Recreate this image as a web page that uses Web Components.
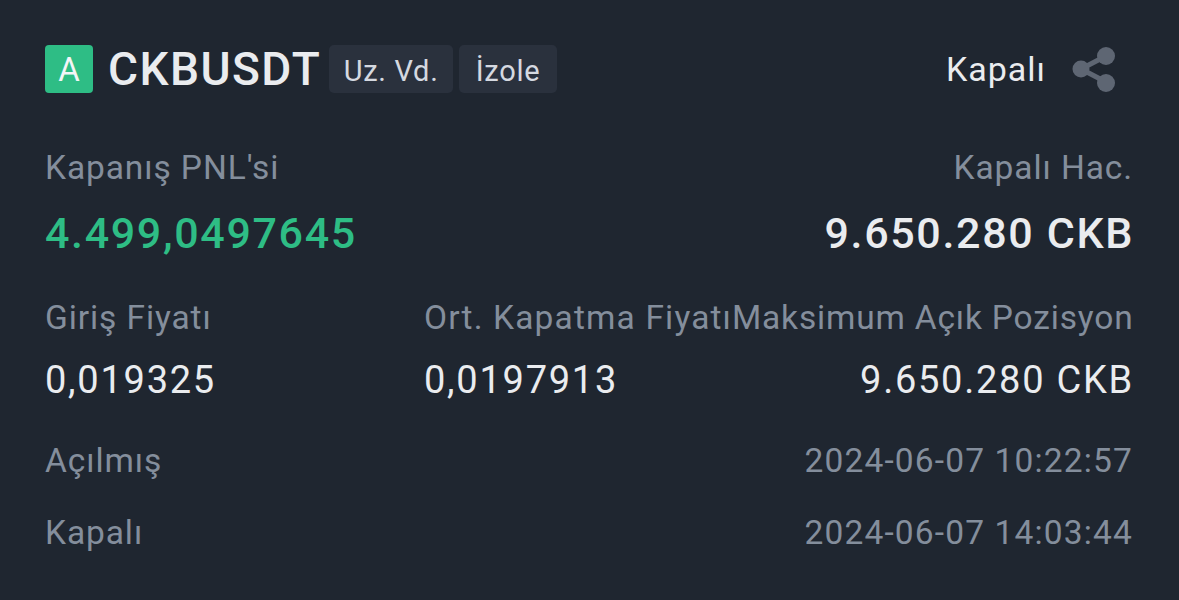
<!DOCTYPE html>
<html>
<head>
<meta charset="utf-8">
<style>
html, body { margin: 0; background: #1f2630; }
body { font-family: Roboto, sans-serif; width: 1179px; height: 600px; overflow: hidden; }
</style>
</head>
<body>
<pnl-card></pnl-card>
<script>
class PnlTag extends HTMLElement {
    constructor() {
        super();
        const shadowRoot = this.attachShadow({ mode: 'open' });
        shadowRoot.innerHTML = `
            <style>
                :host {
                    display: block;
                    box-sizing: border-box;
                    min-width: 98px;
                    height: 48px;
                    line-height: 52px;
                    padding: 0 14.5px;
                    text-align: center;
                    background: #2a313d;
                    border-radius: 5px;
                    color: #d5d9e0;
                    font-family: Roboto, sans-serif;
                    font-size: 29px;
                    letter-spacing: .7px;
                }
            </style>
            <slot></slot>
        `;
    }
}
customElements.define("pnl-tag", PnlTag);

class PnlHeader extends HTMLElement {
    constructor() {
        super();
        const shadowRoot = this.attachShadow({ mode: 'open' });
        shadowRoot.innerHTML = `
            <style>
                :host { display: flex; align-items: center; height: 48px; }
                .lado {
                    width: 48px; height: 48px; border-radius: 4px;
                    background: #2ebd85; color: #f3f5f7;
                    display: flex; align-items: center; justify-content: center;
                    font: 400 33px Roboto, sans-serif;
                }
                .par {
                    margin: 0 8px 0 15px;
                    color: #eaecef;
                    font: 500 46px/50px Roboto, sans-serif;
                    letter-spacing: 1.45px;
                }
                .tags { display: flex; gap: 6px; }
                .estado {
                    margin-left: auto;
                    color: #eaecef;
                    font: 400 34px/52px Roboto, sans-serif;
                    letter-spacing: 1px;
                }
                svg { margin: 0 17px 0 26px; display: block; }
            </style>
            <div class="lado">A</div>
            <div class="par">CKBUSDT</div>
            <div class="tags"><pnl-tag>Uz. Vd.</pnl-tag><pnl-tag>İzole</pnl-tag></div>
            <div class="estado">Kapalı</div>
            <svg width="44" height="46" viewBox="0 0 44 46">
                <path d="M9 23L34 10M9 23L34 36" stroke="#5e6673" stroke-width="5" fill="none"/>
                <circle cx="9" cy="23" r="8.5" fill="#5e6673"/>
                <circle cx="34" cy="10" r="9" fill="#5e6673"/>
                <circle cx="34" cy="37" r="9" fill="#5e6673"/>
            </svg>
        `;
    }
}
customElements.define("pnl-header", PnlHeader);

class PnlField extends HTMLElement {
    constructor() {
        super();
        const shadowRoot = this.attachShadow({ mode: 'open' });
        const derecha = this.getAttribute('align') === 'right';
        shadowRoot.innerHTML = `
            <style>
                :host {
                    display: block;
                    white-space: nowrap;
                    text-align: ${derecha ? 'right' : 'left'};
                    font-family: Roboto, sans-serif;
                }
                .etiqueta { color: #848e9c; font-size: 33.5px; line-height: 40px; letter-spacing: var(--ls, .9px); }
                .valor { color: #eaecef; font-size: 38px; line-height: 46px; margin-top: 19px; letter-spacing: 1.75px; }
                :host([align]) .valor { margin-right: -1px; }
                :host([big]) .valor { font-size: 43px; font-weight: 500; line-height: 50px; margin-top: 20px; letter-spacing: 1.65px; }
                :host([good]) .valor { color: #2ebd85; }
            </style>
            <div class="etiqueta">${this.getAttribute('label')}</div>
            <div class="valor">${this.getAttribute('value')}</div>
        `;
    }
}
customElements.define("pnl-field", PnlField);

class PnlRow extends HTMLElement {
    constructor() {
        super();
        const shadowRoot = this.attachShadow({ mode: 'open' });
        shadowRoot.innerHTML = `
            <style>
                :host {
                    display: flex;
                    justify-content: space-between;
                    height: 40px;
                    line-height: 40px;
                    font-family: Roboto, sans-serif;
                    font-size: 33.5px;
                    letter-spacing: .9px;
                    color: #848e9c;
                }
                .fecha { letter-spacing: 1.15px; }
            </style>
            <span>${this.getAttribute('label')}</span>
            <span class="fecha">${this.getAttribute('value')}</span>
        `;
    }
}
customElements.define("pnl-row", PnlRow);

class PnlCard extends HTMLElement {
    constructor() {
        super();
        const shadowRoot = this.attachShadow({ mode: 'open' });
        shadowRoot.innerHTML = `
            <style>
                :host { display: block; padding: 45px 46px 0 45px; }
                .dos { display: flex; justify-content: space-between; margin-top: 55px; }
                .tres { display: grid; grid-template-columns: 379px 308px minmax(0, 1fr); margin-top: 40px; }
                pnl-row { margin-top: 32px; }
                .filas { margin-top: 38px; }
                .filas pnl-row:first-child { margin-top: 0; }
            </style>
            <pnl-header></pnl-header>
            <div class="dos">
                <pnl-field big good label="Kapanış PNL'si" value="4.499,0497645"></pnl-field>
                <pnl-field big align="right" label="Kapalı Hac." value="9.650.280 CKB"></pnl-field>
            </div>
            <div class="tres">
                <pnl-field label="Giriş Fiyatı" value="0,019325"></pnl-field>
                <pnl-field style="--ls:1.15px" label="Ort. Kapatma Fiyatı" value="0,0197913"></pnl-field>
                <pnl-field style="--ls:.82px" align="right" label="Maksimum Açık Pozisyon" value="9.650.280 CKB"></pnl-field>
            </div>
            <div class="filas">
                <pnl-row label="Açılmış" value="2024-06-07 10:22:57"></pnl-row>
                <pnl-row label="Kapalı" value="2024-06-07 14:03:44"></pnl-row>
            </div>
        `;
    }
}
customElements.define("pnl-card", PnlCard);
</script>
</body>
</html>
